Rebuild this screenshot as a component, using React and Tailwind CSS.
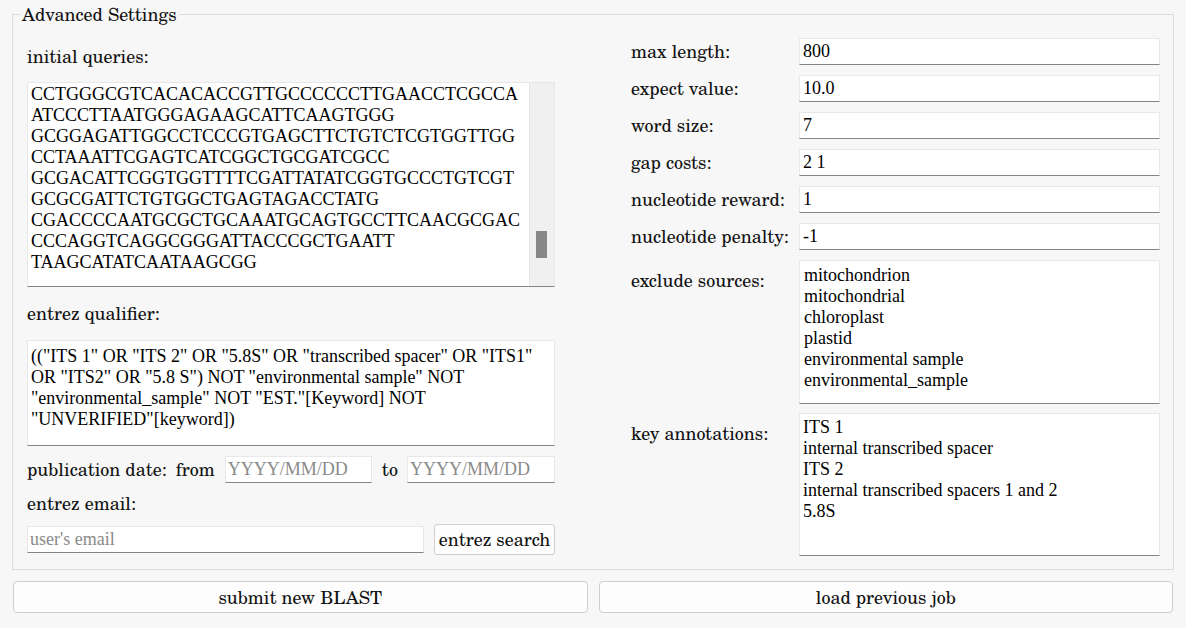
import React from "react";

const LABEL_FONT = "font-['TeX_Gyre_Schola',serif]";
const VALUE_FONT = "font-['Liberation_Serif',serif]";

const seqLines = [
  "CCTGGGCGTCACACACCGTTGCCCCCCTTGAACCTCGCCA",
  "ATCCCTTAATGGGAGAAGCATTCAAGTGGG",
  "GCGGAGATTGGCCTCCCGTGAGCTTCTGTCTCGTGGTTGG",
  "CCTAAATTCGAGTCATCGGCTGCGATCGCC",
  "GCGACATTCGGTGGTTTTCGATTATATCGGTGCCCTGTCGT",
  "GCGCGATTCTGTGGCTGAGTAGACCTATG",
  "CGACCCCAATGCGCTGCAAATGCAGTGCCTTCAACGCGAC",
  "CCCAGGTCAGGCGGGATTACCCGCTGAATT",
  "TAAGCATATCAATAAGCGG",
];

const qualifierLines = [
  '(("ITS 1" OR "ITS 2" OR "5.8S" OR "transcribed spacer" OR "ITS1"',
  'OR "ITS2" OR "5.8 S") NOT "environmental sample" NOT',
  '"environmental_sample" NOT "EST."[Keyword] NOT',
  '"UNVERIFIED"[keyword])',
];

const excludeLines = [
  "mitochondrion",
  "mitochondrial",
  "chloroplast",
  "plastid",
  "environmental sample",
  "environmental_sample",
];

const keyLines = [
  "ITS 1",
  "internal transcribed spacer",
  "ITS 2",
  "internal transcribed spacers 1 and 2",
  "5.8S",
];

function Field({ value, placeholder, className = "" }) {
  return (
    <div
      className={`h-[27px] flex items-center bg-white border border-[#e8e8e8] border-b-[#858585] whitespace-nowrap overflow-hidden ${VALUE_FONT} text-[18px] leading-[21px] ${className}`}
    >
      {value != null ? (
        <span className="px-[3px] text-black">{value}</span>
      ) : (
        <span className="px-[2px] text-[#8a8a8a]">{placeholder}</span>
      )}
    </div>
  );
}

function Box({ lines, className = "" }) {
  return (
    <div
      className={`bg-white border border-[#e8e8e8] border-b-[#858585] ${VALUE_FONT} text-[18px] leading-[21px] text-black whitespace-pre overflow-hidden ${className}`}
    >
      {lines.map((l, i) => (
        <div key={i}>{l}</div>
      ))}
    </div>
  );
}

function Row({ label, value }) {
  return (
    <div className="flex items-center h-[27px]">
      <div className="w-[168px] shrink-0 leading-[21px] -mt-[1px]">{label}</div>
      <Field value={value} className="flex-1 min-w-0" />
    </div>
  );
}

const buttonCls = `bg-[#fdfdfd] border border-[#cfcfcf] text-[18px] text-[#111] ${LABEL_FONT}`;

export default function App() {
  return (
    <div
      className={`w-[1186px] h-[628px] bg-[#f7f7f7] text-[#111] text-[18px] ${LABEL_FONT} pt-[4px] px-[12px] overflow-hidden`}
    >
      <fieldset className="border border-[#dcdcdc] pl-[14px] pr-[13px] pt-[14px] pb-[13px] m-0">
        <legend className="-ml-[7px] px-[2px] leading-[20px]">Advanced Settings</legend>
        <div className="flex">
          {/* left column */}
          <div className="w-[528px] shrink-0 flex flex-col">
            <div className="mt-[8px] h-[21px] leading-[21px]">initial queries:</div>
            <div className="mt-[15px] h-[205px] flex bg-white border border-[#e8e8e8] border-b-[#858585]">
              <div
                className={`flex-1 min-w-0 pl-[3px] pt-[1px] ${VALUE_FONT} text-[18px] leading-[21px] text-black whitespace-pre overflow-hidden`}
              >
                {seqLines.map((l, i) => (
                  <div key={i}>{l}</div>
                ))}
              </div>
              <div className="w-[25px] shrink-0 bg-[#f0f0f0] border-l border-[#e6e6e6] relative">
                <div className="absolute left-[6px] top-[148px] w-[11px] h-[27px] bg-[#878787]" />
              </div>
            </div>
            <div className="mt-[16px] h-[21px] leading-[21px]">entrez qualifier:</div>
            <Box lines={qualifierLines} className="mt-[16px] h-[106px] pl-[3px] pt-[5px]" />
            <div className="mt-[10px] flex items-center h-[27px]">
              <span className="leading-[21px]">publication date:</span>
              <span className="ml-[9px] leading-[21px]">from</span>
              <Field placeholder="YYYY/MM/DD" className="ml-[10px] w-[147px]" />
              <span className="ml-[10px] leading-[21px]">to</span>
              <Field placeholder="YYYY/MM/DD" className="ml-[9px] flex-1 min-w-0" />
            </div>
            <div className="mt-[10px] h-[21px] leading-[21px]">entrez email:</div>
            <div className="mt-[10px] flex items-center h-[31px]">
              <Field placeholder="user's email" className="w-[397px] h-[26px]" />
              <button className={`ml-auto h-[31px] w-[121px] rounded-[3px] ${buttonCls}`}>
                entrez search
              </button>
            </div>
          </div>
          {/* right column */}
          <div className="ml-[76px] flex-1 min-w-0 flex flex-col">
            <div className="flex flex-col gap-[10px]">
              <Row label="max length:" value="800" />
              <Row label="expect value:" value="10.0" />
              <Row label="word size:" value="7" />
              <Row label="gap costs:" value="2 1" />
              <Row label="nucleotide reward:" value="1" />
              <Row label="nucleotide penalty:" value="-1" />
            </div>
            <div className="mt-[10px] flex items-start">
              <div className="w-[168px] shrink-0 pt-[10px] leading-[21px]">exclude sources:</div>
              <Box lines={excludeLines} className="flex-1 min-w-0 h-[144px] pl-[4px] pt-[4px]" />
            </div>
            <div className="mt-[9px] flex items-start">
              <div className="w-[168px] shrink-0 pt-[10px] leading-[21px]">key annotations:</div>
              <Box lines={keyLines} className="flex-1 min-w-0 h-[143px] pl-[3px] pt-[3px]" />
            </div>
          </div>
        </div>
      </fieldset>
      <div className="mt-[11px] px-[1px] grid grid-cols-2 gap-[11px]">
        <button className={`h-[32px] rounded-[4px] ${buttonCls}`}>submit new BLAST</button>
        <button className={`h-[32px] rounded-[4px] ${buttonCls}`}>load previous job</button>
      </div>
    </div>
  );
}
